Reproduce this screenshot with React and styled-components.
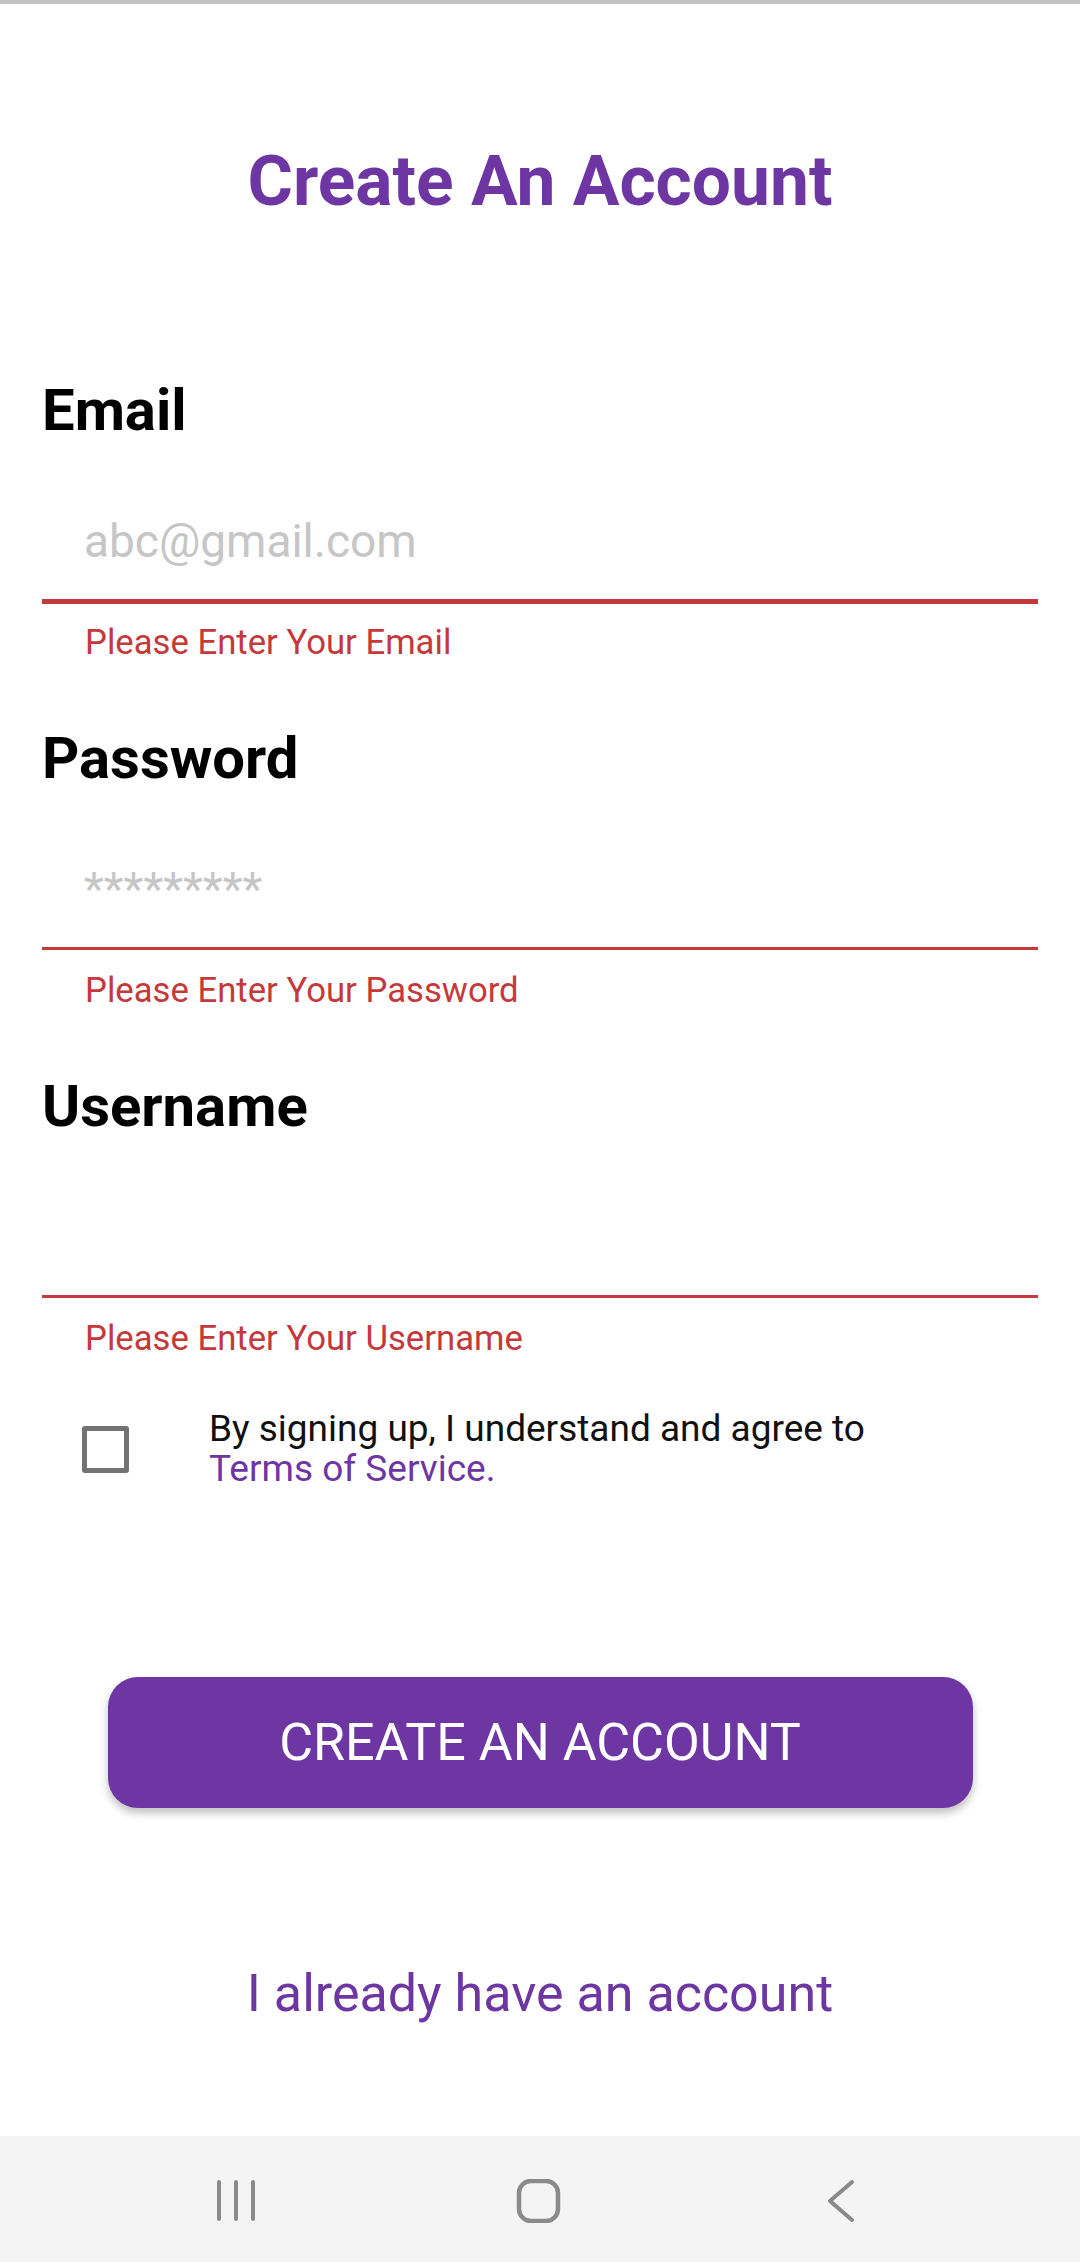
import React from 'react';
import styled, { createGlobalStyle } from 'styled-components';

const PURPLE = '#6d36a3';
const RED = '#c5393b';

const Global = createGlobalStyle`
  html, body { margin: 0; padding: 0; background: #fff; }
  body { font-family: Roboto, "Noto Sans", Arial, sans-serif; }
  * { box-sizing: border-box; }
`;

const Screen = styled.div`
  width: 1080px;
  height: 2262px;
  display: flex;
  flex-direction: column;
  background: #fff;
  overflow: hidden;
`;

const TopEdge = styled.div`
  height: 4px;
  flex-shrink: 0;
  background: #c2c2c2;
`;

const Title = styled.h1`
  margin: 138px 0 0;
  font-size: 69.5px;
  line-height: 80px;
  font-weight: 700;
  color: ${PURPLE};
  text-align: center;
`;

const Form = styled.form`
  display: flex;
  flex-direction: column;
  padding: 0 42px;
  margin-top: 155px;
`;

const Field = styled.div`
  display: flex;
  flex-direction: column;
  & + & { margin-top: 63px; }
`;

const Label = styled.label`
  font-size: 58px;
  line-height: 66px;
  font-weight: 700;
  color: #000;
`;

const Input = styled.input`
  display: block;
  width: 100%;
  height: ${p => 156 + p.$thick}px;
  margin: 0 0 ${p => 5 - p.$thick}px;
  padding: 71px 0 31px 42px;
  border: none;
  border-bottom: ${p => p.$thick}px solid ${RED};
  border-radius: 0;
  background: transparent;
  font-family: inherit;
  font-size: 46px;
  line-height: 54px;
  color: #222;
  outline: none;
  &::placeholder { color: #c6c6c6; opacity: 1; }
`;

const ErrorText = styled.div`
  margin-top: 18px;
  padding-left: 43px;
  font-size: 34.7px;
  line-height: 40px;
  color: ${RED};
`;

const TermsRow = styled.div`
  margin-top: 51px;
  height: 80px;
  display: flex;
  align-items: center;
`;

const Check = styled.input`
  appearance: none;
  -webkit-appearance: none;
  margin: 0 0 0 40px;
  width: 47px;
  height: 47px;
  flex-shrink: 0;
  border: 5px solid #737373;
  border-radius: 3px;
  background: #fff;
`;

const TermsText = styled.div`
  margin-left: 80px;
  font-size: 37px;
  line-height: 40px;
  color: #111;
`;

const TermsLink = styled.span`
  display: block;
  color: ${PURPLE};
`;

const PrimaryButton = styled.button`
  align-self: center;
  margin-top: 188px;
  width: 865px;
  height: 131px;
  border: none;
  border-radius: 30px;
  background: ${PURPLE};
  color: #fff;
  font-family: inherit;
  font-size: 52px;
  font-weight: 400;
  display: flex;
  align-items: center;
  justify-content: center;
  box-shadow: 0 5px 8px rgba(0, 0, 0, 0.25);
`;

const SignInLink = styled.div`
  margin-top: 156px;
  font-size: 52px;
  line-height: 60px;
  text-align: center;
  color: ${PURPLE};
`;

const NavBar = styled.div`
  margin-top: auto;
  height: 126px;
  flex-shrink: 0;
  background: #f4f4f4;
  display: flex;
  align-items: center;
  padding: 4px 0 0 207px;
  gap: 242px;
`;

const NavIcon = styled.svg`
  width: 60px;
  height: 44px;
  display: block;
`;

const NAV = '#8a8a8a';

export default function App() {
  return (
    <Screen>
      <Global />
      <TopEdge />
      <Title>Create An Account</Title>
      <Form onSubmit={e => e.preventDefault()}>
        <Field>
          <Label>Email</Label>
          <Input $thick={5} type="email" placeholder="abc@gmail.com" />
          <ErrorText>Please Enter Your Email</ErrorText>
        </Field>
        <Field>
          <Label>Password</Label>
          <Input $thick={3} type="password" placeholder="*********" />
          <ErrorText>Please Enter Your Password</ErrorText>
        </Field>
        <Field>
          <Label>Username</Label>
          <Input $thick={3} type="text" />
          <ErrorText>Please Enter Your Username</ErrorText>
        </Field>
        <TermsRow>
          <Check type="checkbox" />
          <TermsText>
            By signing up, I understand and agree to
            <TermsLink>Terms of Service.</TermsLink>
          </TermsText>
        </TermsRow>
        <PrimaryButton type="submit">CREATE AN ACCOUNT</PrimaryButton>
      </Form>
      <SignInLink>I already have an account</SignInLink>
      <NavBar>
        <NavIcon viewBox="0 0 60 44">
          <g stroke={NAV} strokeWidth="4" strokeLinecap="round">
            <line x1="12" y1="3" x2="12" y2="40" />
            <line x1="29" y1="3" x2="29" y2="40" />
            <line x1="46" y1="3" x2="46" y2="40" />
          </g>
        </NavIcon>
        <NavIcon viewBox="0 0 60 44">
          <rect x="10" y="2" width="39" height="40" rx="12" fill="none" stroke={NAV} strokeWidth="4.5" />
        </NavIcon>
        <NavIcon viewBox="0 0 60 44">
          <polyline points="41,3 19,22 41,41" fill="none" stroke={NAV} strokeWidth="4" strokeLinecap="round" strokeLinejoin="round" />
        </NavIcon>
      </NavBar>
    </Screen>
  );
}
